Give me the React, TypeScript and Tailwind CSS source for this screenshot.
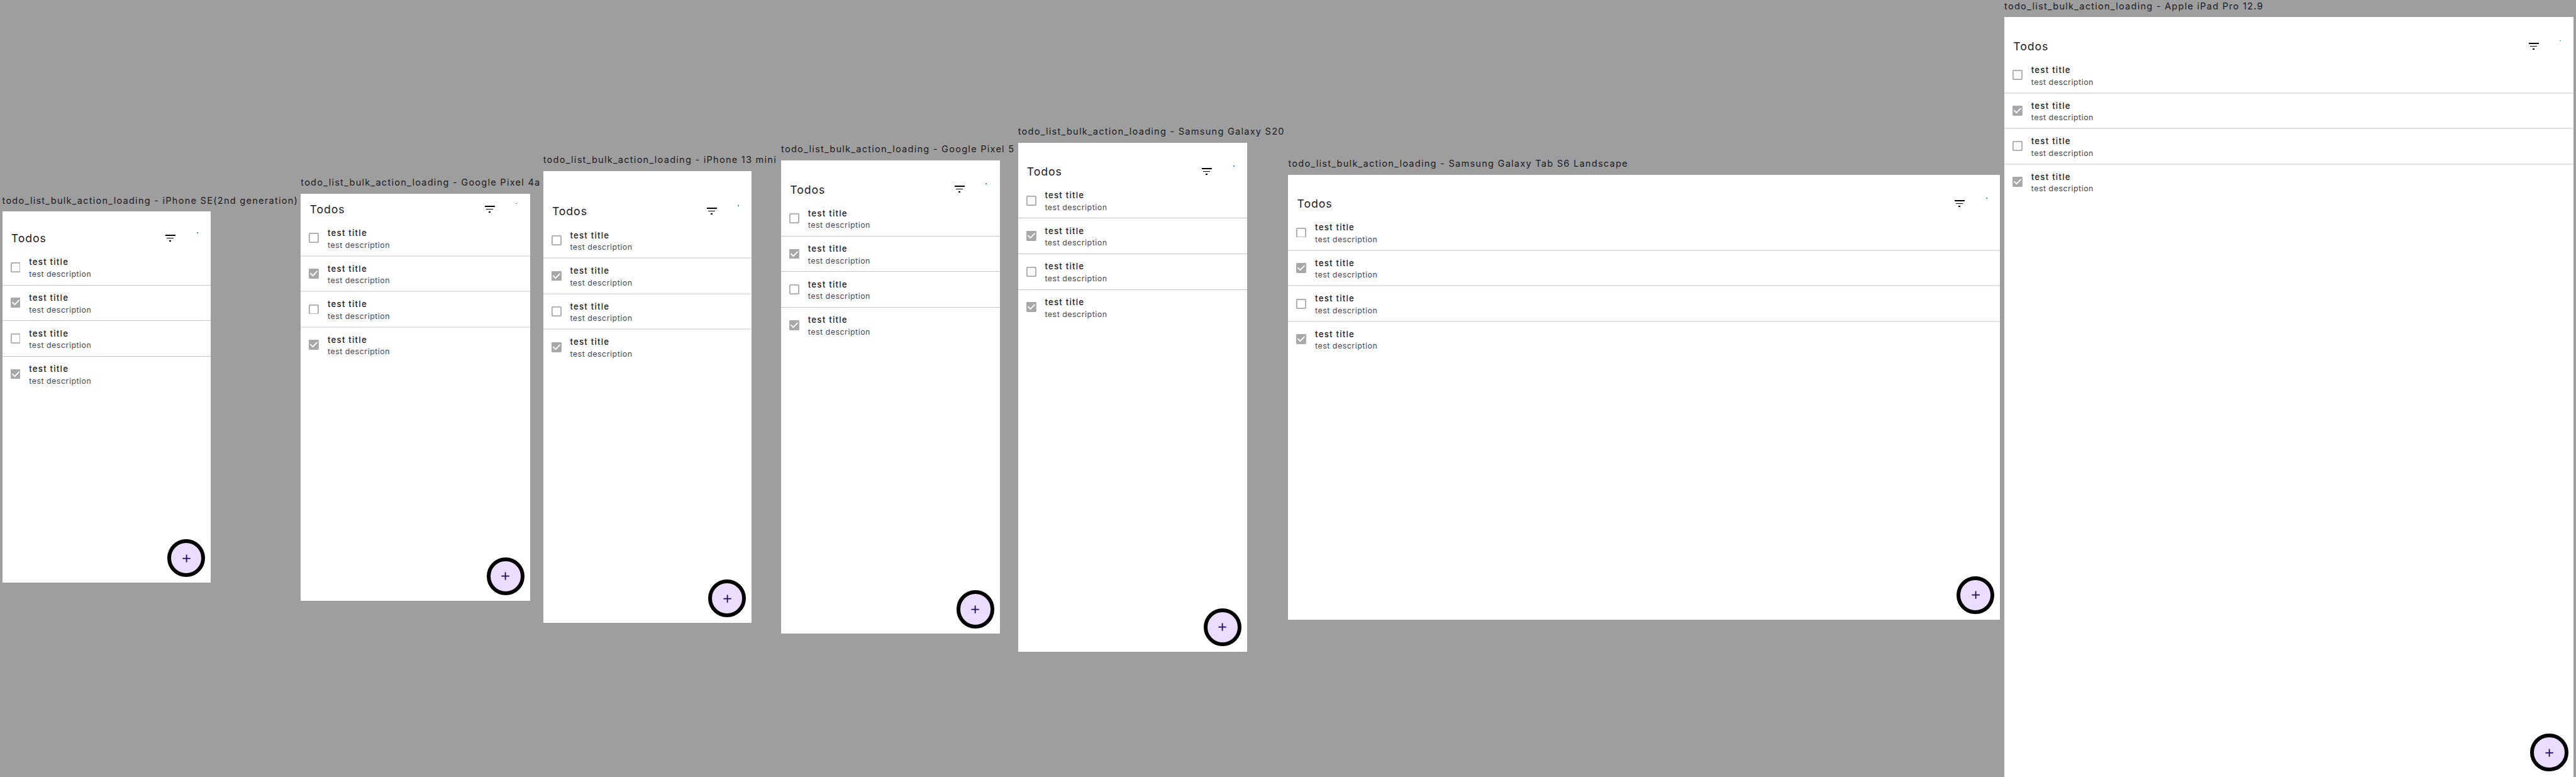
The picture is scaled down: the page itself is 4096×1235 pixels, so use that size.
import { clsx } from "clsx";

type Device = {
  name: string;
  column: string;
  frame: string;
  safeArea: string;
  softDivider: boolean;
};

const devices: Device[] = [
  { name: "iPhone SE(2nd generation)", column: "w-[537px]", frame: "w-[375px] h-[667px]", safeArea: "h-5", softDivider: false },
  { name: "Google Pixel 4a", column: "w-[436px]", frame: "w-[412px] h-[732px]", safeArea: "h-0", softDivider: true },
  { name: "iPhone 13 mini", column: "w-[428px]", frame: "w-[375px] h-[812px]", safeArea: "h-11", softDivider: true },
  { name: "Google Pixel 5", column: "w-[426px]", frame: "w-[393px] h-[851px]", safeArea: "h-6", softDivider: false },
  { name: "Samsung Galaxy S20", column: "w-[486px]", frame: "w-[412px] h-[915px]", safeArea: "h-6", softDivider: false },
  { name: "Samsung Galaxy Tab S6 Landscape", column: "w-[1288px]", frame: "w-[1280px] h-[800px]", safeArea: "h-6", softDivider: true },
  { name: "Apple iPad Pro 12.9", column: "w-[1032px]", frame: "w-[1024px] h-[1366px]", safeArea: "h-6", softDivider: true },
];

const todos = [false, true, false, true];

function Checkbox({ checked }: { checked: boolean }) {
  return (
    <svg viewBox="0 0 18 18" className="size-[18px] shrink-0" fill="none">
      {checked ? (
        <>
          <rect width="18" height="18" rx="1.5" fill="#a8a8aa" />
          <path d="M2.7 8.1 7.2 12.6 15.3 4.5" stroke="#fff" strokeWidth="2" />
        </>
      ) : (
        <rect x="1" y="1" width="16" height="16" rx="1" stroke="#a8a8aa" strokeWidth="2" />
      )}
    </svg>
  );
}

function TodoRow({ checked }: { checked: boolean }) {
  return (
    <div className="flex h-12 items-start pl-[14.7px]">
      <div className="flex h-12 items-center">
        <Checkbox checked={checked} />
      </div>
      <div className="pt-[4.4px] pl-[15.6px] whitespace-nowrap">
        <p className="text-[15px] leading-[21px] font-medium tracking-[1.37px] text-[#1b1b1f]">test title</p>
        <p className="text-[14px] leading-[22px] tracking-[0.6px] text-[#46464f]">test description</p>
      </div>
    </div>
  );
}

function Divider({ soft }: { soft: boolean }) {
  return (
    <div className="flex h-4 items-center">
      <div className={clsx("w-full", soft ? "h-[2.26px] bg-[#e2e1e7]" : "h-[1.13px] bg-[#c7c5d0]")} />
    </div>
  );
}

function Screen({ device }: { device: Device }) {
  return (
    <div className={clsx("relative flex flex-col bg-white", device.frame)}>
      <div className={device.safeArea} />
      <header className="relative flex h-14 items-center justify-between pr-[60.4px] pl-4">
        <h1 className="pt-[2px] text-[20px] leading-7 tracking-[1.05px] text-[#1b1b1f] font-[370]">Todos</h1>
        <svg viewBox="0 0 24 24" className="size-6" fill="#000" shapeRendering="crispEdges">
          <path d="M10 18h4v-2h-4v2zM3 6v2h18V6H3zm3 7h12v-2H6v2z" />
        </svg>
        <span className="absolute top-[17px] right-[23px] size-[2px] bg-[#2196f3]" />
      </header>
      <div>
        {todos.map((checked, i) => (
          <div key={i}>
            {i > 0 && <Divider soft={device.softDivider} />}
            <TodoRow checked={checked} />
          </div>
        ))}
      </div>
      <button className="absolute right-[10px] bottom-[10px] flex size-[68px] items-center justify-center rounded-full border-[6.8px] border-black bg-[#eaddff]">
        <svg viewBox="0 0 24 24" className="size-6 shrink-0" fill="#21005d">
          <path d="M19 13h-6v6h-2v-6H5v-2h6V5h2v6h6v2z" />
        </svg>
      </button>
    </div>
  );
}

export default function App() {
  return (
    <div className="h-screen w-screen overflow-hidden bg-[#9e9e9e] font-['Inter',sans-serif]">
      <main className="flex h-[1397px] w-[4633px] items-center [zoom:0.88409]">
        {devices.map((device) => (
          <section key={device.name} className={clsx("shrink-0 pl-1", device.column)}>
            <h2 className="h-[31px] pt-[0.6px] text-[16.5px] leading-[22px] tracking-[1.4px] whitespace-nowrap text-[#1b1b1f] font-[370]">
              todo_list_bulk_action_loading - {device.name}
            </h2>
            <Screen device={device} />
          </section>
        ))}
      </main>
    </div>
  );
}
